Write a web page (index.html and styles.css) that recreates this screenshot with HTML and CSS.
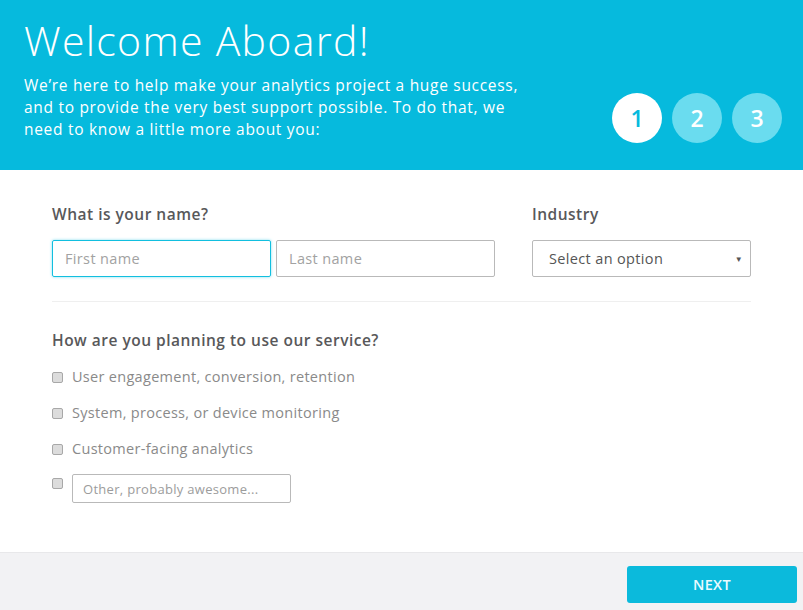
FILE: index.html
```html
<!DOCTYPE html>
<html>
<head>
<meta charset="utf-8">
<link rel="stylesheet" href="styles.css">
</head>
<body>
<header class="hero">
  <div class="hero-text">
    <h1 class="title">Welcome Aboard!</h1>
    <p class="intro">We’re here to help make your analytics project a huge success, and to provide the very best support possible. To do that, we need to know a little more about you:</p>
  </div>
  <div class="steps">
    <span class="step active">1</span>
    <span class="step">2</span>
    <span class="step">3</span>
  </div>
</header>
<main class="form">
  <div class="row">
    <div class="field name">
      <div class="label">What is your name?</div>
      <div class="inputs">
        <div class="input focus">First name</div>
        <div class="input">Last name</div>
      </div>
    </div>
    <div class="field industry">
      <div class="label">Industry</div>
      <div class="select"><span>Select an option</span><span class="caret">▼</span></div>
    </div>
  </div>
  <div class="divider"></div>
  <div class="label">How are you planning to use our service?</div>
  <ul class="checks">
    <li><span class="box"></span>User engagement, conversion, retention</li>
    <li><span class="box"></span>System, process, or device monitoring</li>
    <li><span class="box"></span>Customer-facing analytics</li>
    <li class="other"><span class="box"></span><span class="other-input">Other, probably awesome...</span></li>
  </ul>
</main>
<footer class="footer">
  <button class="next">NEXT</button>
</footer>
</body>
</html>
```
FILE: styles.css
```css
* { box-sizing: border-box; }
html, body { margin: 0; padding: 0; }
body {
  width: 803px;
  height: 610px;
  overflow: hidden;
  font-family: "Open Sans", "Lato", sans-serif;
  background: #fff;
  display: flex;
  flex-direction: column;
}
.hero {
  background: #06badd;
  height: 170px;
  padding: 14px 21px 0 24px;
  display: flex;
  justify-content: space-between;
  color: #fff;
}
.title {
  margin: 0;
  font-size: 41px;
  font-weight: 300;
  line-height: 52px;
  letter-spacing: 1.3px;
}
.intro {
  margin: 8px 0 0;
  width: 510px;
  font-size: 15.5px;
  font-weight: 400;
  line-height: 22px;
  letter-spacing: 0.7px;
}
.steps {
  display: flex;
  gap: 10px;
  margin-top: 79px;
  align-self: flex-start;
}
.step {
  width: 50px;
  height: 50px;
  border-radius: 50%;
  background: #6adcef;
  color: #fff;
  font-size: 23px;
  font-weight: 600;
  display: flex;
  align-items: center;
  justify-content: center;
}
.step.active {
  background: #fff;
  color: #06badd;
}
.form {
  flex: 1;
  padding: 33px 52px 0;
  color: #555;
  border-bottom: 1px solid #e8e8ea;
}
.row {
  display: flex;
  gap: 37px;
}
.label {
  font-size: 15.5px;
  font-weight: 600;
  color: #58585a;
  line-height: 22px;
  letter-spacing: 0.5px;
}
.inputs {
  display: flex;
  gap: 5px;
  margin-top: 15px;
}
.input, .select {
  height: 37px;
  border: 1px solid #b9b9b9;
  border-radius: 2px;
  font-size: 14.5px;
  display: flex;
  align-items: center;
  letter-spacing: 0.35px;
}
.input {
  width: 219px;
  padding-left: 12px;
  color: #a2a2a2;
}
.input.focus {
  border-color: #12bfdf;
  box-shadow: 0 0 3px #7fdcee;
}
.select {
  width: 219px;
  margin-top: 15px;
  padding: 0 7px 0 16px;
  justify-content: space-between;
  color: #555;
}
.caret {
  font-size: 8px;
  color: #555;
}
.divider {
  height: 1px;
  background: #efefef;
  margin: 24px 0 27px;
}
.checks {
  list-style: none;
  margin: 15px 0 0;
  padding: 0;
  display: flex;
  flex-direction: column;
  gap: 14px;
}
.checks li {
  display: flex;
  align-items: center;
  gap: 9px;
  font-size: 14.5px;
  line-height: 22px;
  color: #8a8a8a;
  letter-spacing: 0.3px;
}
.box {
  width: 11px;
  height: 11px;
  border: 1px solid #a8a8a8;
  border-radius: 2px;
  background: #dcdcdc;
  flex: none;
}
.checks li.other {
  align-items: flex-start;
}
.checks li.other .box { margin-top: 4px; }
.other-input {
  width: 219px;
  height: 29px;
  border: 1px solid #b9b9b9;
  border-radius: 2px;
  font-size: 13px;
  letter-spacing: 0.3px;
  color: #9c9c9c;
  padding-left: 10px;
  display: flex;
  align-items: center;
}
.footer {
  height: 57px;
  background: #f2f2f4;
  display: flex;
  justify-content: flex-end;
  padding: 13px 6px 0 0;
}
.next {
  width: 170px;
  height: 37px;
  border: none;
  border-radius: 3px;
  background: #0bbadc;
  color: #eafbff;
  font-family: "Open Sans", sans-serif;
  font-size: 14.5px;
  font-weight: 600;
  letter-spacing: 0.3px;
}
```
